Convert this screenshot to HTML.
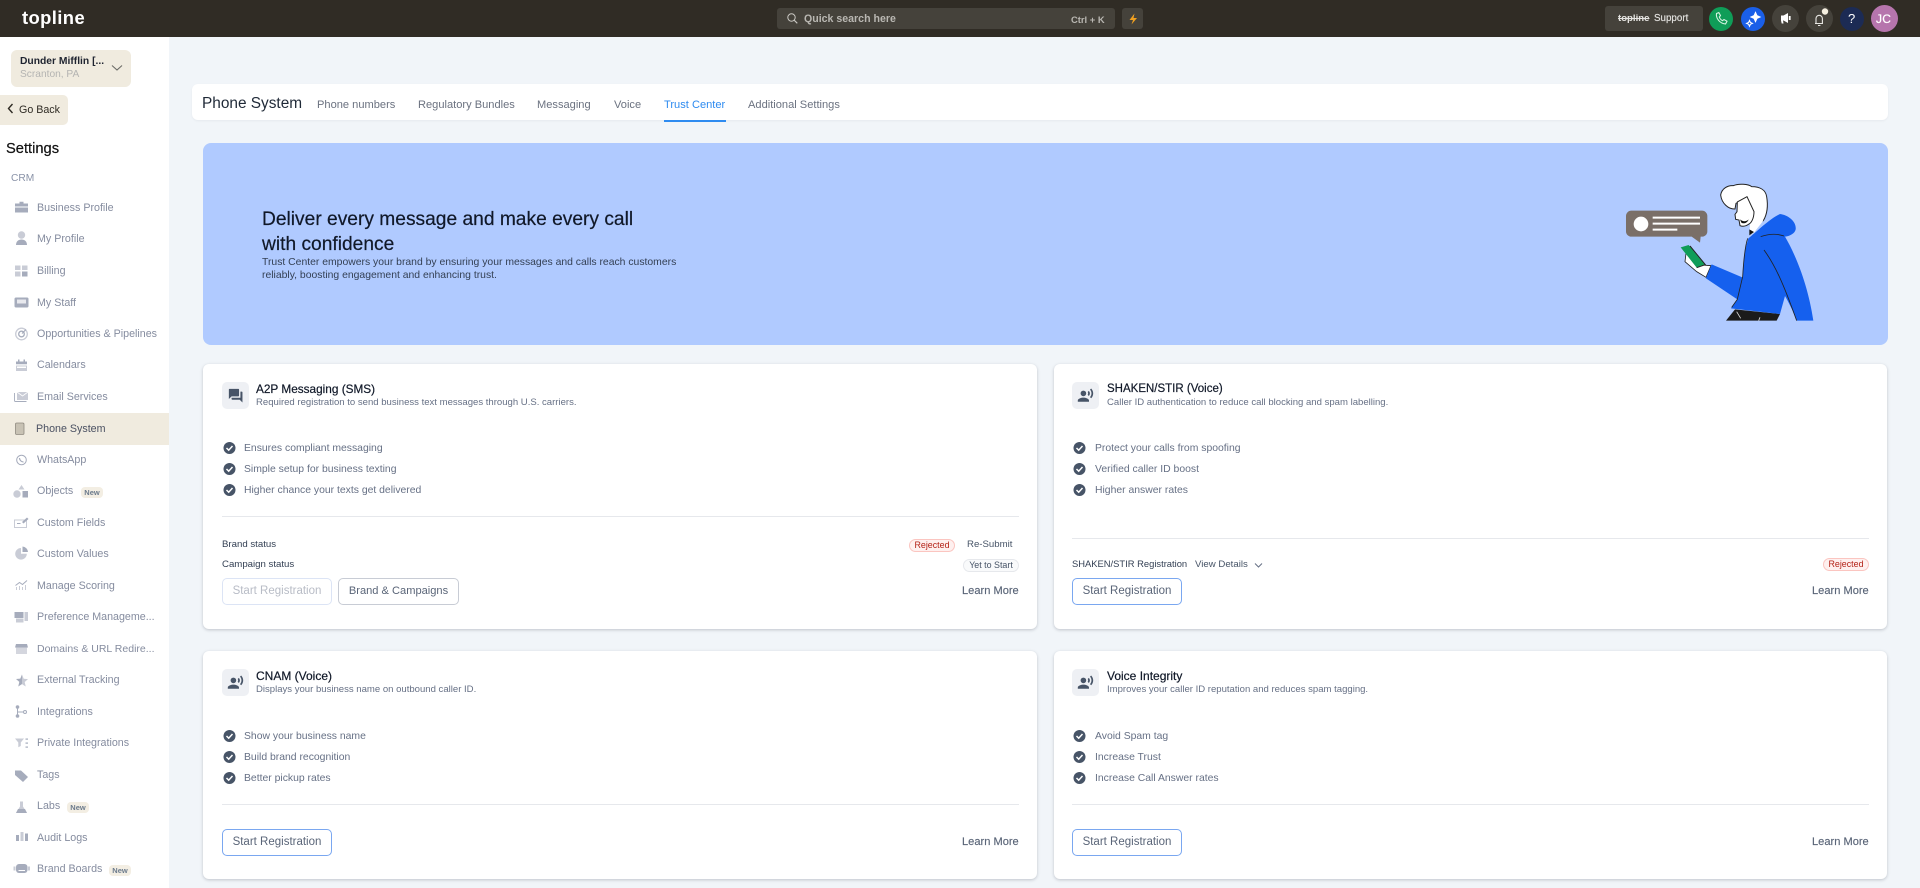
<!DOCTYPE html>
<html lang="en"><head><meta charset="utf-8"><title>Trust Center</title>
<style>
html,body{margin:0;padding:0;width:1920px;height:888px;overflow:hidden;background:#f1f5f9;font-family:"Liberation Sans",sans-serif}
#a{position:relative;width:1920px;height:888px;overflow:hidden}
.b{position:absolute;box-sizing:border-box}
.t{position:absolute;white-space:nowrap;line-height:20px;height:20px;margin-top:1px}
.card{position:absolute;background:#fff;border-radius:6px;box-shadow:0 1px 3px rgba(16,24,40,.22)}
.s{font-size:10.7px;color:#858c9f;left:37px}
.ct{font-size:11.8px;color:#101828;-webkit-text-stroke:.2px #101828}
.cs{font-size:9.55px;color:#667085}
.li{font-size:10.4px;color:#667085}
.lm{font-size:11.1px;color:#5a6578;-webkit-text-stroke:.15px #5a6578}
.st{font-size:9.65px;color:#344054}
.tab{font-size:11.1px;color:#6b7280;top:94px}
.btn{position:absolute;box-sizing:border-box;border-radius:5px;background:#fff;text-align:center;font-size:11.5px;color:#5a6578;border:1px solid #7aa7f0;width:110px;height:27px;line-height:25px}
.pill{position:absolute;box-sizing:border-box;border-radius:7px;height:13px;line-height:11px;text-align:center;font-size:8.9px}
.rej{background:#fef0ef;border:1px solid #fbc5c0;color:#b42318}
.new{position:absolute;background:#f3eee3;border-radius:4px;width:22px;height:11px;line-height:11px;text-align:center;font-size:7.5px;color:#6b7a8c;font-weight:bold}
.hr{position:absolute;height:1px;background:#e6e8ec}
</style></head><body><div id="a">

<div class="b" style="left:0;top:0;width:1920px;height:37px;background:#302c25"></div>
<div class="b" style="left:0;top:37px;width:169px;height:851px;background:#fff"></div>

<!-- top bar -->
<div class="t" style="left:22px;top:7px;font-size:18.4px;font-weight:bold;color:#fff;letter-spacing:.4px">topline</div>
<div class="b" style="left:777px;top:8px;width:338px;height:21px;background:#45423b;border-radius:3px"></div>
<div class="t" style="left:804px;top:8px;font-size:10.6px;font-weight:bold;color:#b9b7b2">Quick search here</div>
<div class="t" style="left:1071px;top:9px;font-size:9.4px;font-weight:bold;color:#b9b7b2">Ctrl + K</div>
<div class="b" style="left:1122px;top:8px;width:21px;height:21px;background:#45423b;border-radius:3px"></div>
<div class="b" style="left:1605px;top:6px;width:98px;height:25px;background:#45423b;border-radius:3px"></div>
<div class="t" style="left:1618px;top:8px;font-size:9.6px;font-weight:bold;color:#e4e3e0;text-decoration:line-through">topline</div>
<div class="t" style="left:1654px;top:8px;font-size:9.8px;color:#e4e3e0;-webkit-text-stroke:.15px #e4e3e0">Support</div>
<div class="b" style="left:1709px;top:7px;width:24px;height:24px;border-radius:50%;background:#0f9d58"></div>
<div class="b" style="left:1741px;top:7px;width:24px;height:24px;border-radius:50%;background:#1a5fe8"></div>
<div class="b" style="left:1772px;top:5px;width:27px;height:27px;border-radius:50%;background:#45423b"></div>
<div class="b" style="left:1806px;top:5px;width:27px;height:27px;border-radius:50%;background:#45423b"></div>
<div class="b" style="left:1840px;top:7px;width:24px;height:24px;border-radius:50%;background:#1c2b54"></div>
<div class="t" style="left:1848px;top:8px;font-size:13px;color:#fff">?</div>
<div class="b" style="left:1871px;top:5px;width:27px;height:27px;border-radius:50%;background:#b675ad"></div>
<div class="t" style="left:1876px;top:8px;font-size:12px;color:#fff;letter-spacing:.3px;-webkit-text-stroke:.2px #fff">JC</div>

<!-- sidebar top -->
<div class="b" style="left:11px;top:50px;width:120px;height:37px;background:#f0ebdf;border-radius:6px"></div>
<div class="t" style="left:20px;top:51px;font-size:10.3px;font-weight:bold;color:#1f2430">Dunder Mifflin [...</div>
<div class="t" style="left:20px;top:64px;font-size:10.2px;color:#b4b4b2">Scranton, PA</div>
<div class="b" style="left:0;top:95px;width:68px;height:30px;background:#f0ebdf;border-radius:0 5px 5px 0"></div>
<div class="t" style="left:19px;top:99px;font-size:10.7px;color:#2f2b24">Go Back</div>
<div class="t" style="left:6px;top:138px;font-size:14.7px;color:#111;-webkit-text-stroke:.2px #111">Settings</div>
<div class="t" style="left:11px;top:168px;font-size:10.2px;color:#8a93a8">CRM</div>
<div class="b" style="left:0;top:413px;width:169px;height:32px;background:#f0ebdf"></div>

<!-- sidebar items -->
<div class="t s" style="top:197px">Business Profile</div>
<div class="t s" style="top:228px">My Profile</div>
<div class="t s" style="top:260px">Billing</div>
<div class="t s" style="top:292px">My Staff</div>
<div class="t s" style="top:323px">Opportunities &amp; Pipelines</div>
<div class="t s" style="top:354px">Calendars</div>
<div class="t s" style="top:386px">Email Services</div>
<div class="t s" style="top:418px;left:36px;color:#4b5162">Phone System</div>
<div class="t s" style="top:449px">WhatsApp</div>
<div class="t s" style="top:480px">Objects</div><div class="new" style="left:81px;top:487px">New</div>
<div class="t s" style="top:512px">Custom Fields</div>
<div class="t s" style="top:543px">Custom Values</div>
<div class="t s" style="top:575px">Manage Scoring</div>
<div class="t s" style="top:606px">Preference Manageme...</div>
<div class="t s" style="top:638px;font-size:10.5px">Domains &amp; URL Redire...</div>
<div class="t s" style="top:669px">External Tracking</div>
<div class="t s" style="top:701px">Integrations</div>
<div class="t s" style="top:732px">Private Integrations</div>
<div class="t s" style="top:764px">Tags</div>
<div class="t s" style="top:795px">Labs</div><div class="new" style="left:67px;top:802px">New</div>
<div class="t s" style="top:827px">Audit Logs</div>
<div class="t s" style="top:858px">Brand Boards</div><div class="new" style="left:109px;top:865px">New</div>

<!-- header -->
<div class="card" style="left:192px;top:84px;width:1696px;height:36px;border-radius:6px;box-shadow:0 1px 2px rgba(16,24,40,.05)"></div>
<div class="t" style="left:202px;top:93px;font-size:15.4px;color:#1f2937">Phone System</div>
<div class="t tab" style="left:317px">Phone numbers</div>
<div class="t tab" style="left:418px">Regulatory Bundles</div>
<div class="t tab" style="left:537px">Messaging</div>
<div class="t tab" style="left:614px">Voice</div>
<div class="t tab" style="left:664px;color:#2e8bf0">Trust Center</div>
<div class="t tab" style="left:748px">Additional Settings</div>
<div class="b" style="left:664px;top:120px;width:62px;height:2px;background:#2e8bf0"></div>

<!-- banner -->
<div class="b" style="left:203px;top:143px;width:1685px;height:202px;background:#b0caff;border-radius:8px"></div>
<div class="t" style="left:262px;top:209px;font-size:19.2px;color:#101828;-webkit-text-stroke:.2px #101828">Deliver every message and make every call</div>
<div class="t" style="left:262px;top:234px;font-size:19.2px;color:#101828;-webkit-text-stroke:.2px #101828">with confidence</div>
<div class="t" style="left:262px;top:252px;font-size:10.4px;color:#344054">Trust Center empowers your brand by ensuring your messages and calls reach customers</div>
<div class="t" style="left:262px;top:265px;font-size:10.4px;color:#344054">reliably, boosting engagement and enhancing trust.</div>

<!-- cards -->
<div class="card" style="left:203px;top:364px;width:834px;height:265px"></div>
<div class="card" style="left:1054px;top:364px;width:833px;height:265px"></div>
<div class="card" style="left:203px;top:651px;width:834px;height:228px"></div>
<div class="card" style="left:1054px;top:651px;width:833px;height:228px"></div>

<!-- card icon boxes -->
<div class="b" style="left:222px;top:382px;width:27px;height:27px;background:#eef0f4;border-radius:5px"></div>
<div class="b" style="left:1072px;top:382px;width:27px;height:27px;background:#eef0f4;border-radius:5px"></div>
<div class="b" style="left:222px;top:669px;width:27px;height:27px;background:#eef0f4;border-radius:5px"></div>
<div class="b" style="left:1072px;top:669px;width:27px;height:27px;background:#eef0f4;border-radius:5px"></div>

<!-- card 1 -->
<div class="t ct" style="left:256px;top:378px">A2P Messaging (SMS)</div>
<div class="t cs" style="left:256px;top:392px">Required registration to send business text messages through U.S. carriers.</div>
<div class="t li" style="left:244px;top:438px">Ensures compliant messaging</div>
<div class="t li" style="left:244px;top:459px">Simple setup for business texting</div>
<div class="t li" style="left:244px;top:480px">Higher chance your texts get delivered</div>
<div class="hr" style="left:222px;top:516px;width:797px"></div>
<div class="t st" style="left:222px;top:534px">Brand status</div>
<div class="t st" style="left:222px;top:554px">Campaign status</div>
<div class="pill rej" style="left:909px;top:539px;width:46px">Rejected</div>
<div class="t st" style="left:967px;top:534px;color:#475467">Re-Submit</div>
<div class="pill" style="left:963px;top:559px;width:56px;background:#f9fafb;border:1px solid #e6e8ec;color:#475467">Yet to Start</div>
<div class="btn" style="left:222px;top:578px;border-color:#dce4f5;color:#b8bcc6">Start Registration</div>
<div class="btn" style="left:338px;top:578px;width:121px;border-color:#c8ccd5;font-size:11.1px">Brand &amp; Campaigns</div>
<div class="t lm" style="left:962px;top:580px">Learn More</div>

<!-- card 2 -->
<div class="t ct" style="left:1107px;top:378px;font-size:11.5px">SHAKEN/STIR (Voice)</div>
<div class="t cs" style="left:1107px;top:392px">Caller ID authentication to reduce call blocking and spam labelling.</div>
<div class="t li" style="left:1095px;top:438px">Protect your calls from spoofing</div>
<div class="t li" style="left:1095px;top:459px">Verified caller ID boost</div>
<div class="t li" style="left:1095px;top:480px">Higher answer rates</div>
<div class="hr" style="left:1072px;top:538px;width:797px"></div>
<div class="t st" style="left:1072px;top:553px;font-size:9.4px">SHAKEN/STIR Registration</div>
<div class="t st" style="left:1195px;top:554px;color:#475467">View Details</div>
<div class="pill rej" style="left:1823px;top:558px;width:46px">Rejected</div>
<div class="btn" style="left:1072px;top:578px">Start Registration</div>
<div class="t lm" style="left:1812px;top:580px">Learn More</div>

<!-- card 3 -->
<div class="t ct" style="left:256px;top:665px;font-size:12px">CNAM (Voice)</div>
<div class="t cs" style="left:256px;top:679px">Displays your business name on outbound caller ID.</div>
<div class="t li" style="left:244px;top:726px">Show your business name</div>
<div class="t li" style="left:244px;top:747px">Build brand recognition</div>
<div class="t li" style="left:244px;top:768px">Better pickup rates</div>
<div class="hr" style="left:222px;top:804px;width:797px"></div>
<div class="btn" style="left:222px;top:829px">Start Registration</div>
<div class="t lm" style="left:962px;top:831px">Learn More</div>

<!-- card 4 -->
<div class="t ct" style="left:1107px;top:665px;font-size:12px">Voice Integrity</div>
<div class="t cs" style="left:1107px;top:679px">Improves your caller ID reputation and reduces spam tagging.</div>
<div class="t li" style="left:1095px;top:726px">Avoid Spam tag</div>
<div class="t li" style="left:1095px;top:747px">Increase Trust</div>
<div class="t li" style="left:1095px;top:768px">Increase Call Answer rates</div>
<div class="hr" style="left:1072px;top:804px;width:797px"></div>
<div class="btn" style="left:1072px;top:829px">Start Registration</div>
<div class="t lm" style="left:1812px;top:831px">Learn More</div>

<!-- icon overlay -->
<svg width="1920" height="888" viewBox="0 0 1920 888" style="position:absolute;left:0;top:0;pointer-events:none">
<defs>
<g id="ck"><circle r="6" fill="#475467"/><path d="M-3 0l2.200 2.200L3-2" fill="none" stroke="#fff" stroke-width="1.500"/></g>
<g id="vo"><path transform="translate(-8.400 -8.400) scale(.7)" fill="#475467" d="M9 5a4 4 0 1 0 0 8a4 4 0 1 0 0-8zM9 15c-2.670 0-8 1.340-8 4v2h16v-2c0-2.660-5.330-4-8-4zm7.760-9.640l-1.680 1.690c.84 1.180.84 2.710 0 3.890l1.680 1.690c2.020-2.020 2.020-5.070 0-7.270zM20.070 2l-1.630 1.630c2.770 3.020 2.770 7.560 0 10.740L20.070 16c3.900-3.890 3.910-9.950 0-14z"/></g>
</defs>

<!-- checks -->
<use href="#ck" x="229.500" y="448"/><use href="#ck" x="229.500" y="469"/><use href="#ck" x="229.500" y="490"/>
<use href="#ck" x="1079.500" y="448"/><use href="#ck" x="1079.500" y="469"/><use href="#ck" x="1079.500" y="490"/>
<use href="#ck" x="229.500" y="736"/><use href="#ck" x="229.500" y="757"/><use href="#ck" x="229.500" y="778"/>
<use href="#ck" x="1079.500" y="736"/><use href="#ck" x="1079.500" y="757"/><use href="#ck" x="1079.500" y="778"/>

<!-- card icons -->
<path transform="translate(227.500 387.500) scale(.68)" fill="#475467" d="M21 6h-2v9H6v2c0 .55.45 1 1 1h11l4 4V7c0-.55-.45-1-1-1zm-4 6V3c0-.55-.45-1-1-1H3c-.55 0-1 .45-1 1v14l4-4h10c.55 0 1-.45 1-1z"/>
<use href="#vo" x="1085.500" y="395.500"/><use href="#vo" x="235.500" y="682.500"/><use href="#vo" x="1085.500" y="682.500"/>

<!-- small chevrons -->
<path d="M112 65.500l5 4.500 5-4.500" fill="none" stroke="#6b6b66" stroke-width="1.100"/>
<path d="M12.500 104l-4 4.500 4 4.500" fill="none" stroke="#2f2b24" stroke-width="1.400"/>
<path d="M1255 563.500l3.500 3.500 3.500-3.500" fill="none" stroke="#667085" stroke-width="1"/>

<!-- top bar icons -->
<circle cx="791.500" cy="17.500" r="3.700" fill="none" stroke="#c9c7c2" stroke-width="1"/><path d="M794.300 20.300l3 3" stroke="#c9c7c2" stroke-width="1.100"/>
<path d="M1134.500 13.500l-5 6.500h3.500l-1.500 4.500 5.500-6.500h-3.500z" fill="#f0a020"/>
<path d="M1716.500 13.500c-.8 5 3.500 10 9 10.500l1.500-2.800-3-1.700-1.500 1.200c-1.500-.8-2.700-2.200-3.200-3.700l1.200-1.400-1.700-3z" fill="none" stroke="#d6f3e2" stroke-width="1.100"/>
<g fill="none" stroke="#fff" stroke-width="1.100"><path d="M1755.500 12.500l1.400 3.100 3.100 1.400-3.100 1.400-1.400 3.100-1.400-3.100-3.100-1.400 3.100-1.400z" fill="#fff"/><path d="M1749.500 20.500l.9 2 2 .9-2 .9-.9 2-.9-2-2-.9 2-.9z"/></g>
<path d="M1781 15.500h2.500l4.500-2.500v10l-4.500-2.500h-.5l.5 3h-1.800l-.7-3z" fill="#fff"/><rect x="1788.800" y="16" width="1.800" height="4" fill="#fff"/>
<path d="M1815 23.500h8M1816 23.500v-5a3.200 3.200 0 0 1 6.400 0v5M1818 25.500h2.400" fill="none" stroke="#e8e7e3" stroke-width="1.100"/>
<circle cx="1825" cy="11.500" r="3.200" fill="#f5efe0"/>

<!-- sidebar icons -->
<g fill="#a6acbc">
<path d="M15 203.500h4.500v-1.800h4v1.800h4.500v3h-13zM15 207.500h13v5h-13z"/>
<circle cx="21.500" cy="235" r="3.700" fill="#c9ccd6"/><path d="M16 245c0-3.700 2.500-5.500 5.500-5.500s5.500 1.800 5.500 5.500z"/>
<rect x="15" y="265.500" width="5.500" height="4.500" fill="#c9ccd6"/><rect x="22" y="265.500" width="5.500" height="4.500" fill="#c9ccd6"/><rect x="15" y="271.500" width="5.500" height="5" fill="#c9ccd6"/><rect x="22" y="271.500" width="5.500" height="5"/>
<path d="M16 297.500h11a1.500 1.500 0 0 1 1.500 1.500v7a1.500 1.500 0 0 1-1.500 1.500H16a1.500 1.500 0 0 1-1.500-1.500v-7a1.500 1.500 0 0 1 1.500-1.500z"/><rect x="17" y="299.500" width="9" height="4" fill="#e8e9ee"/>
<circle cx="21.500" cy="334" r="5.800" fill="none" stroke="#c9ccd6" stroke-width="1.300"/><circle cx="21.500" cy="334" r="2.800" fill="none" stroke="#a6acbc" stroke-width="1.300"/><path d="M22 333.500l4-4" stroke="#a6acbc" stroke-width="1.200"/>
<path d="M16 361.500h11v2.700h-11zM18 359.500h1.500v2h-1.500zM23.500 359.500h1.500v2h-1.500z"/><path d="M16 365.500h11v5.500h-11z" fill="#c9ccd6"/><rect x="17" y="366.500" width="9" height="1.500" fill="#fff"/>
<rect x="17" y="392" width="11" height="8" fill="#c9ccd6"/><path d="M17 392l5.500 4 5.500-4" fill="none" stroke="#fff" stroke-width=".8"/><path d="M14.500 393v7.500a1 1 0 0 0 1 1h11" fill="none" stroke="#a6acbc" stroke-width=".9"/>
<rect x="15.500" y="423" width="8.500" height="11.500" rx="1.200" fill="#c8c2b4" stroke="#8f8a80" stroke-width=".8"/>
<circle cx="21.500" cy="460" r="4.800" fill="none" stroke="#a6acbc" stroke-width="1"/><path d="M19.500 458c-.1 2 1.800 4 4 4" fill="none" stroke="#a6acbc" stroke-width="1.200"/>
<path d="M21.500 485l3 4.500h-6z" fill="#c9ccd6"/><circle cx="17" cy="494" r="3.700" fill="#c9ccd6"/><rect x="22.500" y="491" width="5.500" height="6.500"/>
<rect x="14.500" y="520" width="12" height="7.500" fill="none" stroke="#c9ccd6" stroke-width="1"/><path d="M22 522l5-4.500 1.500 1.500-5 4.500z"/><rect x="17" y="523" width="3.500" height="1"/>
<path d="M21 548a5.800 5.800 0 1 0 5.800 5.800h-5.800z" fill="#c9ccd6"/><path d="M22.500 546.500a5.800 5.800 0 0 1 5.500 5.500h-5.500z"/>
<path d="M15.500 585.500l4-3 3 2 4.500-4" fill="none" stroke="#a6acbc" stroke-width="1"/><path d="M16 587h1v3h-1zM19 586h1v4h-1zM22 587h1v3h-1zM25 585h1v5h-1z" fill="#c9ccd6"/>
<rect x="14.500" y="612" width="9" height="6"/><rect x="16" y="618.500" width="7.500" height="4" fill="#c9ccd6"/><rect x="24.500" y="612" width="3.500" height="9" fill="#c9ccd6"/>
<path d="M16 644h11l1 3.500h-13z"/><rect x="16" y="647.500" width="11" height="6.500" fill="#d4d6de"/>
<path d="M22 674.500l1.700 4.200 4.300.4-3.300 2.900 1 4.500-3.700-2.400-3.700 2.400z" fill="#c9ccd6"/><path d="M22 674.500v9.500l-3.700 2.400 1-4.500-3.300-2.900 4.300-.4z"/>
<circle cx="17.500" cy="707" r="1.800"/><circle cx="17.500" cy="716" r="1.800"/><circle cx="25" cy="712" r="1.500" fill="none" stroke="#a6acbc"/><path d="M17.500 708v7M17.500 712h6" stroke="#a6acbc" stroke-width="1" fill="none"/>
<path d="M15 738.500h9l-3.200 4v3.500l-2.500 1.300v-4.800z" fill="#c9ccd6"/><rect x="25.500" y="738.500" width="2.500" height="1.200"/><rect x="25.500" y="742.500" width="2.500" height="1.200"/><rect x="25.500" y="746.500" width="2.500" height="1.200"/>
<path d="M15 770.500h6l7 6.500-5 5-8-7z"/>
<path d="M20 801.500h3v5l4 6.500h-11l4-6.500z" fill="#c9ccd6"/><path d="M18 809h7l2 4h-11z"/>
<rect x="16" y="835" width="3" height="6"/><rect x="20.500" y="832" width="3" height="9" fill="#c9ccd6"/><rect x="25" y="833.500" width="3" height="7.500"/>
<rect x="16" y="864" width="11.500" height="9" rx="3"/><rect x="13.500" y="866.500" width="2" height="4" fill="#c9ccd6"/><rect x="28" y="866.500" width="2" height="4" fill="#c9ccd6"/><rect x="18.500" y="870" width="6.500" height="1" fill="#fff"/>
</g>

<!-- illustration -->
<g transform="translate(1600 170) scale(.33333)">
<path d="M94 122H306a16 16 0 0 1 16 16V184a16 16 0 0 1-16 16H302L300 218L275 200H94a16 16 0 0 1-16-16V138a16 16 0 0 1 16-16z" fill="#7a6f68"/>
<circle cx="123" cy="162" r="22" fill="#fff"/>
<path d="M158 143H300M158 161H300M158 179H232" stroke="#fff" stroke-width="6"/>
<path d="M362 75C365 55 385 45 400 47C415 40 445 42 455 50C480 50 497 60 500 80C505 110 500 135 490 152C480 160 470 160 462 150L440 85L408 100L405 117C385 118 365 100 362 75z" fill="#fff" stroke="#222" stroke-width="3"/>
<path d="M450 160L448 195L462 188L490 152L462 140z" fill="#fff"/>
<path d="M448 178L448 196L462 186z" fill="#111"/>
<path d="M412 96L441 80L462 125C462 148 452 160 447 162C436 170 428 170 420 167L417 150L407 148L405 133L411 125z" fill="#fff" stroke="#222" stroke-width="3"/>
<path d="M420 148C428 155 438 156 446 148C442 160 430 162 424 158z" fill="#111"/>
<path d="M405 418L378 452H530L540 432z" fill="#1b1b1b"/>
<path d="M410 425L422 445M480 442L476 452" stroke="#ddd" stroke-width="2.500"/>
<path d="M258 250L255 275L290 305L318 322L333 287L305 285L280 250z" fill="#fff" stroke="#222" stroke-width="2.500"/>
<path d="M242 232L266 225L314 283L290 293z" fill="#0f9d58"/>
<path d="M270 228L316 284L290 293" fill="none" stroke="#222" stroke-width="3"/>
<path d="M445 205C470 185 510 145 540 132C565 135 590 155 587 178C585 190 570 198 555 200C590 260 625 350 640 452H590C578 420 565 395 555 378L540 432L393 415L412 388L318 325L335 283L427 322L435 240z" fill="#1560ee"/>
<path d="M443 205C438 220 432 250 428 320L412 388L395 412" fill="none" stroke="#222" stroke-width="2.500"/>
<path d="M482 200C505 192 530 190 552 198M492 240C525 285 550 340 590 452" fill="none" stroke="#222" stroke-width="2.500"/>
</g>
</svg>
</div></body></html>
